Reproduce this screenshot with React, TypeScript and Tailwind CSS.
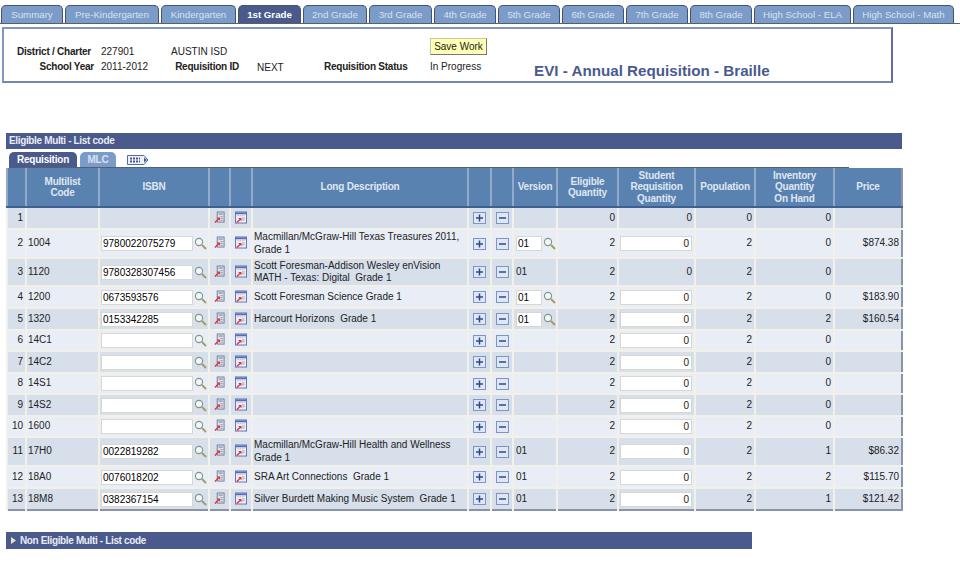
const TABS = [
  { label: "Summary", w: "w-[62px]" },
  { label: "Pre-Kindergarten", w: "w-[94px]" },
  { label: "Kindergarten", w: "w-[75px]" },
  { label: "1st Grade", w: "w-[63px]", active: true },
  { label: "2nd Grade", w: "w-[64px]" },
  { label: "3rd Grade", w: "w-[63px]" },
  { label: "4th Grade", w: "w-[62px]" },
  { label: "5th Grade", w: "w-[62px]" },
  { label: "6th Grade", w: "w-[62px]" },
  { label: "7th Grade", w: "w-[62px]" },
  { label: "8th Grade", w: "w-[62px]" },
  { label: "High School - ELA", w: "w-[97px]" },
  { label: "High School - Math", w: "w-[101px]" },
];

interface Row {
  n: number;
  code: string;
  isbn?: string;
  isbnInput: boolean;
  desc?: string;
  version?: string;
  versionInput?: boolean;
  eligible: number;
  student: number;
  studentInput: boolean;
  population: number;
  inventory: number;
  price?: string;
  h: string;
}

const ROWS: Row[] = [
  { n: 1, code: "", isbnInput: false, eligible: 0, student: 0, studentInput: false, population: 0, inventory: 0, h: "h-[22px]" },
  { n: 2, code: "1004", isbn: "9780022075279", isbnInput: true, desc: "Macmillan/McGraw-Hill Texas Treasures 2011, Grade 1", version: "01", versionInput: true, eligible: 2, student: 0, studentInput: true, population: 2, inventory: 0, price: "$874.38", h: "h-[29px]" },
  { n: 3, code: "1120", isbn: "9780328307456", isbnInput: true, desc: "Scott Foresman-Addison Wesley enVision MATH - Texas: Digital  Grade 1", version: "01", eligible: 2, student: 0, studentInput: false, population: 2, inventory: 0, h: "h-[28px]" },
  { n: 4, code: "1200", isbn: "0673593576", isbnInput: true, desc: "Scott Foresman Science Grade 1", version: "01", versionInput: true, eligible: 2, student: 0, studentInput: true, population: 2, inventory: 0, price: "$183.90", h: "h-[22px]" },
  { n: 5, code: "1320", isbn: "0153342285", isbnInput: true, desc: "Harcourt Horizons  Grade 1", version: "01", versionInput: true, eligible: 2, student: 0, studentInput: true, population: 2, inventory: 2, price: "$160.54", h: "h-[22px]" },
  { n: 6, code: "14C1", isbnInput: true, eligible: 2, student: 0, studentInput: true, population: 2, inventory: 0, h: "h-[21px]" },
  { n: 7, code: "14C2", isbnInput: true, eligible: 2, student: 0, studentInput: true, population: 2, inventory: 0, h: "h-[22px]" },
  { n: 8, code: "14S1", isbnInput: true, eligible: 2, student: 0, studentInput: true, population: 2, inventory: 0, h: "h-[21px]" },
  { n: 9, code: "14S2", isbnInput: true, eligible: 2, student: 0, studentInput: true, population: 2, inventory: 0, h: "h-[22px]" },
  { n: 10, code: "1600", isbnInput: true, eligible: 2, student: 0, studentInput: true, population: 2, inventory: 0, h: "h-[21px]" },
  { n: 11, code: "17H0", isbn: "0022819282", isbnInput: true, desc: "Macmillan/McGraw-Hill Health and Wellness Grade 1", version: "01", eligible: 2, student: 0, studentInput: true, population: 2, inventory: 1, price: "$86.32", h: "h-[29px]" },
  { n: 12, code: "18A0", isbn: "0076018202", isbnInput: true, desc: "SRA Art Connections  Grade 1", version: "01", eligible: 2, student: 0, studentInput: true, population: 2, inventory: 2, price: "$115.70", h: "h-[22px]" },
  { n: 13, code: "18M8", isbn: "0382367154", isbnInput: true, desc: "Silver Burdett Making Music System  Grade 1", version: "01", eligible: 2, student: 0, studentInput: true, population: 2, inventory: 1, price: "$121.42", h: "h-[22px]" },
];

function Lookup() {
  return (
    <svg width="13" height="13" viewBox="0 0 13 13" className="shrink-0">
      <line x1="8" y1="8" x2="12" y2="12" stroke="#a89860" strokeWidth="1.8" />
      <circle cx="5" cy="5" r="3.6" fill="#f2f6f4" stroke="#7d9590" strokeWidth="1.1" />
    </svg>
  );
}

function PageIcon() {
  return (
    <svg width="11" height="13" viewBox="0 0 12 13" className="mx-auto mb-[2px] block">
      <rect x="3.5" y="0.5" width="7.5" height="11" fill="#dfe3ea" stroke="#6d7a96" />
      <rect x="5" y="2" width="4.5" height="1.5" fill="#8d99b2" />
      <path d="M7 5.5h2.5M7 7.5h2.5M7 9.5h2.5" stroke="#8d99b2" />
      <path d="M1 12 L5 8" stroke="#e5282c" strokeWidth="1.4" />
      <path d="M3 6.5 H6.5 V10 Z" fill="#e5282c" />
    </svg>
  );
}

function WindowIcon() {
  return (
    <svg width="12" height="13" viewBox="0 0 13 13" className="mx-auto mb-[2px] block">
      <rect x="0.5" y="0.5" width="12" height="12" fill="#eceef6" stroke="#5a6cb4" />
      <rect x="1" y="1" width="11" height="2" fill="#5a6cb4" />
      <path d="M2.5 4.5h8" stroke="#b0b8d8" strokeDasharray="1.5 1" />
      <path d="M7.5 7h3M7.5 9h3" stroke="#a8a890" />
      <path d="M2 12 L5.5 8.5" stroke="#e5282c" strokeWidth="1.4" />
      <path d="M3.5 7 H7 V10.5 Z" fill="#e5282c" />
    </svg>
  );
}

function PlusMinus({ plus }: { plus: boolean }) {
  return (
    <svg width="13" height="12" viewBox="0 0 13 12" className="mx-auto block">
      <rect x="0.5" y="0.5" width="12" height="11" fill="#dfe6f5" stroke="#7f94c6" />
      <path d="M3 6h7" stroke="#2f4a86" strokeWidth="1.5" />
      {plus && <path d="M6.5 2.5v7" stroke="#2f4a86" strokeWidth="1.5" />}
    </svg>
  );
}

function Field({ value, w }: { value: string; w: string }) {
  return (
    <div className={`${w} h-[15px] bg-white border border-[#d8d8d0] px-[1px] text-[10px] leading-[13px] text-black shrink-0 overflow-hidden`}>
      {value}
    </div>
  );
}

const headCell = "bg-[#5a82b0] text-[#dfe7f2] text-[10px] tracking-[-0.2px] font-bold text-center leading-[11.5px] border-l-2 border-[#93aac8] border-b-2 border-b-[#3f5f92] align-middle p-0";
const cell = "border-l-2 border-[#f1f1ea] border-t-2 border-t-[#f1f1ea] p-0 text-[10px] leading-[12.5px] text-[#222] align-middle";
const label = "text-right font-bold text-[10px] tracking-[-0.24px] whitespace-nowrap";

export default function App() {
  return (
    <div className="w-[960px] h-[564px] bg-white overflow-hidden font-['Liberation_Sans',Arial,sans-serif]">
      {/* grade tabs */}
      <div className="flex items-end gap-[2px] pl-[1px] pt-[5px] h-[18px] border-b border-[#55606f] box-content">
        {TABS.map((t) => (
          <div
            key={t.label}
            className={`${t.w} h-[18px] rounded-t-[5px] border border-b-0 border-[#46546f] text-center text-[9.7px] leading-[17px] ${
              t.active ? "bg-[#4a5a8c] text-white font-bold" : "bg-[#7b9cc8] text-[#d8e2f0]"
            }`}
          >
            {t.label}
          </div>
        ))}
      </div>

      {/* header box */}
      <div className="ml-[2px] mt-[3px] w-[891px] h-[56px] border-2 border-[#8496bd] border-r-[#5d70a0] border-b-[#7486ae] text-[10px] text-[#222] flex flex-col pt-[9px]">
        <div className="flex items-start h-[18px]">
          <span className={`w-[87px] mt-[6px] ${label}`}>District / Charter</span>
          <span className="ml-[10px] w-[70px] mt-[6px]">227901</span>
          <span className="mt-[6px] w-[259px]">AUSTIN ISD</span>
          <button className="w-[57px] h-[17px] bg-[#ffffb5] border border-[#c8c8a0] border-r-[#777] border-b-[#777] text-[10px] leading-[14px] text-[#222]">
            Save Work
          </button>
        </div>
        <div className="flex items-start mt-[3px]">
          <span className={`w-[90px] ${label}`}>School Year</span>
          <span className="ml-[7px] w-[68px]">2011-2012</span>
          <span className={`w-[70px] ${label}`}>Requisition ID</span>
          <span className="ml-[18px] w-[67px] mt-[1px]">NEXT</span>
          <span className={`w-[82px] ${label}`}>Requisition Status</span>
          <span className="ml-[24px] w-[104px]">In Progress</span>
          <span className="text-[#4a5a8c] font-bold text-[15.2px] leading-[18px] mt-[-2px] translate-y-[5px] whitespace-nowrap">
            EVI - Annual Requisition - Braille
          </span>
        </div>
      </div>

      {/* eligible section */}
      <div className="ml-[6px] mt-[50px] w-[896px]">
        <div className="h-[16px] bg-[#4a5a8c] text-[#e8ecf4] font-bold text-[10px] tracking-[-0.35px] leading-[16px] pl-[3px]">
          Eligible Multi - List code
        </div>
        <div className="h-[19px] flex items-end pl-[3px] gap-[3px] bg-white">
          <div className="flex items-end gap-[2px] w-[840px] h-[16px] border-b border-[#55606f]">
            <div className="w-[68px] h-[15px] rounded-t-[5px] bg-[#4a5a8c] text-white font-bold text-[10px] tracking-[-0.2px] leading-[15px] text-center">
              Requisition
            </div>
            <div className="w-[36px] h-[15px] rounded-t-[5px] bg-[#7b9cc8] text-[#d8e2f0] font-bold text-[10px] tracking-[-0.2px] leading-[15px] text-center ml-[1px]">
              MLC
            </div>
            <svg width="22" height="12" viewBox="0 0 22 12" className="ml-[9px] mb-[1px]">
              <path d="M0.5 1.5 H17 L21 6 L17 10.5 H0.5 Z" fill="#eef1f8" stroke="#5a6a9a" />
              <path d="M3 4.5h10M3 7.5h10" stroke="#3f5a9a" strokeWidth="2" strokeDasharray="2 1" />
              <path d="M17 3.5 L20 6 L17 8.5 Z" fill="#3f5a9a" />
            </svg>
          </div>
        </div>

        <table className="table-fixed border-collapse w-[895px] border-b-2 border-b-[#8a93a8] border-l-2 border-l-[#8a93a8] border-r-2 border-r-[#8a93a8]">
          <colgroup>
            <col className="w-[19px]" />
            <col className="w-[73px]" />
            <col className="w-[110px]" />
            <col className="w-[21px]" />
            <col className="w-[22px]" />
            <col className="w-[216px]" />
            <col className="w-[23px]" />
            <col className="w-[22px]" />
            <col className="w-[44px]" />
            <col className="w-[61px]" />
            <col className="w-[77px]" />
            <col className="w-[60px]" />
            <col className="w-[79px]" />
            <col className="w-[68px]" />
          </colgroup>
          <thead>
            <tr className="h-[39px]">
              <th className={headCell} />
              <th className={headCell}>Multilist<br />Code</th>
              <th className={headCell}>ISBN</th>
              <th className={headCell} />
              <th className={headCell} />
              <th className={headCell}>Long Description</th>
              <th className={headCell} />
              <th className={headCell} />
              <th className={headCell}>Version</th>
              <th className={headCell}>Eligible<br />Quantity</th>
              <th className={headCell}>Student<br />Requisition<br />Quantity</th>
              <th className={headCell}>Population</th>
              <th className={headCell}>Inventory<br />Quantity<br />On Hand</th>
              <th className={headCell}>Price</th>
            </tr>
          </thead>
          <tbody>
            {ROWS.map((r) => (
              <tr key={r.n} className={`${r.h} ${r.n % 2 === 1 ? "bg-[#d7dfeb]" : "bg-[#e9eef6]"}`}>
                <td className={`${cell} text-right pr-[2px]`}>{r.n}</td>
                <td className={`${cell} pl-[1px]`}>{r.code}</td>
                <td className={cell}>
                  {r.isbnInput && (
                    <div className="flex items-center gap-[1px] pl-[1px]">
                      <Field value={r.isbn ?? ""} w="w-[92px]" />
                      <Lookup />
                    </div>
                  )}
                </td>
                <td className={cell}><PageIcon /></td>
                <td className={cell}><WindowIcon /></td>
                <td className={`${cell} pl-[1px] whitespace-pre-wrap`}>{r.desc}</td>
                <td className={cell}><PlusMinus plus /></td>
                <td className={cell}><PlusMinus plus={false} /></td>
                <td className={`${cell} pl-[2px]`}>
                  {r.versionInput ? (
                    <div className="flex items-center gap-[1px]">
                      <Field value={r.version ?? ""} w="w-[26px]" />
                      <Lookup />
                    </div>
                  ) : (
                    r.version
                  )}
                </td>
                <td className={`${cell} text-right pr-[2px]`}>{r.eligible}</td>
                <td className={`${cell} text-right`}>
                  {r.studentInput ? (
                    <div className="w-[72px] h-[15px] ml-[1px] bg-white border border-[#d8d8d0] pr-[2px] leading-[13px] text-[10px]">
                      {r.student}
                    </div>
                  ) : (
                    <span className="pr-[2px]">{r.student}</span>
                  )}
                </td>
                <td className={`${cell} text-right pr-[2px]`}>{r.population}</td>
                <td className={`${cell} text-right pr-[2px]`}>{r.inventory}</td>
                <td className={`${cell} text-right pr-[2px]`}>{r.price}</td>
              </tr>
            ))}
          </tbody>
        </table>
      </div>

      {/* collapsed section */}
      <div className="ml-[6px] mt-[21px] w-[746px] h-[17px] bg-[#4a5a8c] flex items-center text-[#e8ecf4] font-bold text-[10px] tracking-[-0.36px] pl-[5px] gap-[4px]">
        <svg width="5" height="7" viewBox="0 0 5 7"><path d="M0 0 L5 3.5 L0 7 Z" fill="#e8e4c8" /></svg>
        Non Eligible Multi - List code
      </div>
    </div>
  );
}
